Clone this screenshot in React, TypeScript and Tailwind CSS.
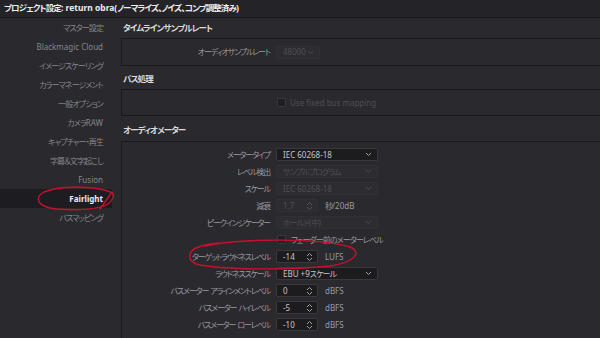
import React from "react";

const CJK = /([\u3000-\u30ff\u4e00-\u9fff\uff00-\uffef]+)/;

const J = ({ t, tight }: { t: string; tight?: boolean }) => (
  <>
    {t.split(CJK).map((part, i) =>
      CJK.test(part) ? (
        <span key={i} className={tight ? "tracking-[-1.15px]" : "tracking-[-0.9px]"}>
          {part}
        </span>
      ) : (
        <span key={i}>{part}</span>
      )
    )}
  </>
);

const Chevron = ({ dim }: { dim?: boolean }) => (
  <svg width="7" height="5" viewBox="0 0 7 5" className="shrink-0">
    <polyline points="1,1 3.5,3.5 6,1" fill="none" stroke={dim ? "#4a4a4f" : "#a0a0a4"} strokeWidth="1" />
  </svg>
);

const UpDown = ({ dim }: { dim?: boolean }) => (
  <svg width="7" height="10" viewBox="0 0 7 10" className="shrink-0">
    <polyline points="1,4 3.5,1.5 6,4" fill="none" stroke={dim ? "#55555a" : "#a0a0a4"} strokeWidth="1" />
    <polyline points="1,6 3.5,8.5 6,6" fill="none" stroke={dim ? "#55555a" : "#a0a0a4"} strokeWidth="1" />
  </svg>
);

const Dropdown = ({ value, active, w = "w-[102px]" }: { value: string; active?: boolean; w?: string }) => (
  <div
    className={`${w} h-[13px] flex items-center justify-between pl-[6px] pr-[5px] rounded-[2px] border ${
      active ? "bg-[#1c1c1f] border-[#38383d] text-[#c4c4c8]" : "bg-[#2c2c31] border-[#303035] text-[#4f4f55]"
    }`}
  >
    <span className="leading-none">
      <J t={value} />
    </span>
    <Chevron dim={!active} />
  </div>
);

const Spinner = ({ value, active }: { value: string; active?: boolean }) => (
  <div
    className={`w-[42px] h-[13px] flex items-center justify-between pl-[6px] pr-[4px] rounded-[2px] border ${
      active ? "bg-[#1c1c1f] border-[#38383d] text-[#c4c4c8]" : "bg-[#2c2c31] border-[#303035] text-[#4f4f55]"
    }`}
  >
    <span className="leading-none">{value}</span>
    <UpDown dim={!active} />
  </div>
);

const Check = () => <div className="w-[9px] h-[9px] rounded-[1px] bg-[#1f1f23] border border-[#38383d]" />;

const Row = ({ label, children }: { label?: string; children: React.ReactNode }) => (
  <div className="h-[17px] flex items-center">
    <div className="w-[148px] flex justify-end text-[#9a9aa0] leading-none whitespace-nowrap">
      <span>{label ? <J t={label} tight /> : null}</span>
    </div>
    <div className="ml-[6px] flex items-center">{children}</div>
  </div>
);

const Unit = ({ t }: { t: string }) => (
  <span className="ml-[7px] text-[#9a9aa0] leading-none">
    <J t={t} />
  </span>
);

const sidebar = [
  "マスター設定",
  "Blackmagic Cloud",
  "イメージスケーリング",
  "カラーマネージメント",
  "一般オプション",
  "カメラRAW",
  "キャプチャー・再生",
  "字幕＆文字起こし",
  "Fusion",
  "Fairlight",
  "バスマッピング",
];

export default function App() {
  return (
    <div className="w-[600px] h-[338px] overflow-hidden bg-[#29292e] relative font-['Noto_Sans','Noto_Sans_CJK_JP',sans-serif] [font-feature-settings:'palt'] text-[8px]">
      <div className="h-[18px] border-b border-[#19191c] bg-[#242428] px-[4px] flex items-center text-[8.5px] font-bold text-[#ececec] leading-none whitespace-nowrap">
        <J t="プロジェクト設定 : return obra(ノーマライズ、ノイズ、コンプ調整済み)" />
      </div>
      <div className="flex">
        <div className="w-[112px] flex flex-col shrink-0">
          {sidebar.map((s) =>
            s === "Fairlight" ? (
              <div key={s} className="h-[19px] flex items-center justify-end pr-[9px] bg-[#1d1d21] text-[#ededed] font-bold leading-none">
                {s}
              </div>
            ) : (
              <div key={s} className="h-[19px] flex items-center justify-end pr-[9px] text-[#86868b] leading-none whitespace-nowrap">
                <J t={s} />
              </div>
            )
          )}
        </div>
        <div className="flex-1 pl-[9px] flex flex-col">
          <div className="h-[20px] flex items-center pl-[2px] font-bold text-[#dcdcdc] text-[8.5px] leading-none">
            <J t="タイムラインサンプルレート" />
          </div>
          <div className="h-[28px] border border-r-0 border-[#19191c] flex items-center">
            <Row label="オーディオサンプルレート">
              <Dropdown value="48000" w="w-[44px]" />
            </Row>
          </div>
          <div className="h-[23px] flex items-end pb-[6px] pl-[2px] font-bold text-[#dcdcdc] text-[8.5px] leading-none">
            <J t="バス処理" />
          </div>
          <div className="h-[27px] border border-r-0 border-[#19191c] flex items-center">
            <Row>
              <div className="ml-[1px] flex items-center">
                <Check />
                <span className="ml-[4px] text-[#4f4f55] leading-none">Use fixed bus mapping</span>
              </div>
            </Row>
          </div>
          <div className="h-[25px] flex items-end pb-[7px] pl-[2px] font-bold text-[#dcdcdc] text-[8.5px] leading-none">
            <J t="オーディオメーター" />
          </div>
          <div className="h-[200px] border border-r-0 border-[#19191c] pt-[4px] flex flex-col">
            <Row label="メータータイプ">
              <Dropdown value="IEC 60268-18" active />
            </Row>
            <Row label="レベル検出">
              <Dropdown value="サンプルプログラム" />
            </Row>
            <Row label="スケール">
              <Dropdown value="IEC 60268-18" />
            </Row>
            <Row label="減衰">
              <Spinner value="1.7" />
              <Unit t="秒/20dB" />
            </Row>
            <Row label="ピークインジケーター">
              <Dropdown value="ホールド(中)" />
            </Row>
            <Row>
              <div className="ml-[1px] flex items-center">
                <Check />
                <span className="ml-[5px] text-[#9a9aa0] leading-none">
                  <J t="フェーダー前のメーターレベル" />
                </span>
              </div>
            </Row>
            <Row label="ターゲットラウドネスレベル">
              <Spinner value="-14" active />
              <Unit t="LUFS" />
            </Row>
            <Row label="ラウドネススケール">
              <Dropdown value="EBU +9スケール" active />
            </Row>
            <Row label="バスメーター アラインメントレベル">
              <Spinner value="0" active />
              <Unit t="dBFS" />
            </Row>
            <Row label="バスメーター ハイレベル">
              <Spinner value="-5" active />
              <Unit t="dBFS" />
            </Row>
            <Row label="バスメーター ローレベル">
              <Spinner value="-10" active />
              <Unit t="dBFS" />
            </Row>
          </div>
        </div>
      </div>
      <svg className="absolute inset-0 pointer-events-none" width="600" height="338" viewBox="0 0 600 338">
        <path
          d="M112 193 C 100 186, 60 185, 44 192 C 33 198, 38 207, 56 209 C 78 211, 100 209, 108 204 C 113 200, 115 195, 112 192 L 100 209"
          fill="none"
          stroke="#c8102e"
          strokeWidth="1.4"
          strokeLinecap="round"
        />
        <path
          d="M205 246 C 240 238, 320 238, 350 247 C 362 252, 356 262, 330 266 C 290 270, 230 270, 200 265 C 186 262, 188 252, 196 248 C 203 245, 215 243, 225 243"
          fill="none"
          stroke="#c8102e"
          strokeWidth="1.4"
          strokeLinecap="round"
        />
      </svg>
    </div>
  );
}
